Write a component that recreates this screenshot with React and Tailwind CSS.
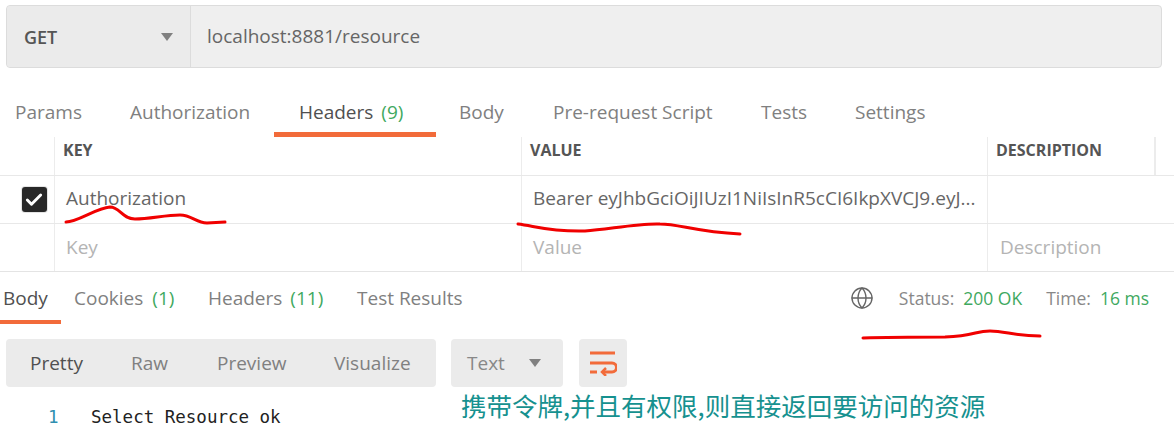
import React from 'react'
import { Globe, Check } from 'lucide-react'

const Count = ({ children, className = 'ml-[8px]' }) => <span className={`text-[#3fa95f] ${className}`}>{children}</span>

const Caret = ({ className }) => (
    <svg className={className} width="12" height="8" viewBox="0 0 12 8">
        <path d="M0 0h12L6 8z" fill="#808080" />
    </svg>
)

const RequestTab = ({ children, active, className }) => (
    <div className={`h-[42px] flex items-center ${active ? 'border-b-[5px] border-[#f26b3a] pb-[3px] text-[#505050]' : 'pb-[8px] text-[#808080]'} ${className}`}>
        {children}
    </div>
)

const Row = ({ check, keyText, value, desc, muted }) => (
    <div className="flex h-[48px] border-t border-[#e8e8e8] text-[19px]">
        <div className="w-[55px] border-r border-[#ececec] flex items-center justify-center pl-[14px]">
            {check && (
                <div className="w-[25px] h-[25px] rounded-[3px] bg-[#282828] ring-1 ring-[#e4e4e4] flex items-center justify-center">
                    <Check size={20} strokeWidth={3.5} className="text-white" />
                </div>
            )}
        </div>
        <div className={`w-[467px] border-r border-[#ececec] pl-[11px] flex items-center ${muted ? 'text-[#b4b4b4]' : 'pb-[2px] text-[#666]'}`}>{keyText}</div>
        <div className={`w-[466px] border-r border-[#ececec] pl-[11px] flex items-center whitespace-nowrap overflow-hidden ${muted ? 'text-[#b4b4b4]' : 'pb-[2px] text-[#666]'}`}>{value}</div>
        <div className="flex-1 pl-[12px] flex items-center text-[#b4b4b4]">{desc}</div>
    </div>
)

export default function App() {
    return (
        <div className="relative w-[1174px] h-[445px] bg-white overflow-hidden font-['Open_Sans',sans-serif]">
            {/* URL bar */}
            <div className="pt-[5px] pl-[6px] pr-[12px]">
                <div className="h-[63px] flex bg-[#efefef] border border-[#dcdcdc] rounded-[4px]">
                    <div className="w-[184px] pt-[1px] flex items-center shrink-0 border-r border-[#dcdcdc] bg-[#ebebeb] rounded-l-[4px]">
                        <span className="pl-[17px] text-[18px] font-semibold text-[#555]">GET</span>
                        <Caret className="ml-auto mr-[17px]" />
                    </div>
                    <div className="pl-[16px] flex items-center text-[19px] text-[#666]">localhost:8881/resource</div>
                </div>
            </div>

            {/* Request tabs */}
            <div className="flex mt-[27px] h-[42px] text-[19px] whitespace-nowrap">
                <RequestTab className="pl-[15px] w-[130px]">Params</RequestTab>
                <RequestTab className="w-[144px]">Authorization</RequestTab>
                <RequestTab active className="w-[162px] pl-[25px]">Headers<Count>(9)</Count></RequestTab>
                <RequestTab className="pl-[23px] w-[117px]">Body</RequestTab>
                <RequestTab className="w-[208px]">Pre-request Script</RequestTab>
                <RequestTab className="w-[94px]">Tests</RequestTab>
                <RequestTab>Settings</RequestTab>
            </div>

            {/* Headers table */}
            <div className="flex h-[38px] text-[16px] font-bold text-[#555]">
                <div className="w-[55px] border-r border-[#ececec]" />
                <div className="w-[467px] border-r border-[#ececec] pl-[8px] pb-[12px] flex items-center">KEY</div>
                <div className="w-[466px] border-r border-[#ececec] pl-[8px] pb-[12px] flex items-center">VALUE</div>
                <div className="w-[168px] border-r-2 border-[#ececec] pl-[8px] pb-[12px] flex items-center">DESCRIPTION</div>
            </div>
            <Row check keyText="Authorization" value="Bearer eyJhbGciOiJIUzI1NiIsInR5cCI6IkpXVCJ9.eyJ..." />
            <Row muted keyText="Key" value="Value" desc="Description" />

            {/* Response tabs */}
            <div className="flex items-start border-t border-[#e4e4e4] h-[52px] text-[19px] whitespace-nowrap">
                <div className="w-[61px] h-[52px] pl-[3px] pt-[12px] border-b-[4px] border-[#f26b3a] text-[#505050]">Body</div>
                <div className="pl-[13px] w-[147px] pt-[12px] text-[#808080]">Cookies<Count className="ml-[9px]">(1)</Count></div>
                <div className="w-[149px] pt-[12px] text-[#808080]">Headers<Count>(11)</Count></div>
                <div className="pt-[12px] text-[#808080]">Test Results</div>
                <div className="ml-auto pr-[25px] pt-[13px] flex items-center text-[17.5px] text-[#888]">
                    <Globe size={24} strokeWidth={1.4} className="text-[#666] mr-[25px]" />
                    <span>Status:</span>
                    <span className="ml-[9px] text-[#3fa95f]">200 OK</span>
                    <span className="ml-[24px]">Time:</span>
                    <span className="ml-[9px] text-[#3fa95f]">16 ms</span>
                </div>
            </div>

            {/* Response toolbar */}
            <div className="flex mt-[16px] pl-[6px] h-[48px] text-[19px]">
                <div className="w-[430px] flex items-center bg-[#ebebeb] rounded-[4px] text-[#808080]">
                    <span className="pl-[24px] w-[125px] text-[#505050]">Pretty</span>
                    <span className="w-[86px]">Raw</span>
                    <span className="w-[117px]">Preview</span>
                    <span>Visualize</span>
                </div>
                <div className="ml-[15px] w-[112px] flex items-center bg-[#ebebeb] rounded-[4px] text-[#888]">
                    <span className="pl-[16px]">Text</span>
                    <Caret className="ml-auto mr-[22px]" />
                </div>
                <div className="ml-[16px] w-[48px] flex items-center justify-center bg-[#ebebeb] rounded-[4px]">
                    <svg width="28" height="26" viewBox="0 0 28 26" fill="none" stroke="#f26b3a" strokeWidth="3">
                        <path d="M1 3h25M1 13h22a3.5 3.5 0 0 1 0 9H14M1 22h7" />
                        <path d="M17 18l-4 4 4 4" strokeWidth="2.5" />
                    </svg>
                </div>
            </div>

            {/* Code */}
            <div className="flex mt-[19px] h-[22px] items-center font-['DejaVu_Sans_Mono',monospace] text-[17.5px] whitespace-pre">
                <span className="pl-[48px] w-[91px] text-[#2f8fb0]">1</span>
                <span className="text-[#222]">Select Resource ok</span>
            </div>

            {/* Annotation drawn over the screenshot */}
            <div className="absolute left-[461px] top-[389px] text-[25.5px] leading-[32px] text-[#16918f] whitespace-nowrap font-['Noto_Sans_CJK_SC',sans-serif]">
                携带令牌,并且有权限,则直接返回要访问的资源
            </div>
            <svg className="absolute left-0 top-0 pointer-events-none" width="1174" height="445" fill="none" stroke="#f00000" strokeWidth="3" strokeLinecap="round">
                <path d="M66 222C78 222 96 208 110 207C120 207 122 219 135 219C150 219 165 215 180 215C192 215 196 223 207 223L225 222" />
                <path d="M518 224C535 226 550 232 585 231C610 229 640 223 660 224C680 224 695 232 740 234" />
                <path d="M863 338C890 337 920 337 945 337C975 336 975 331 990 331C1005 331 1015 336 1040 336" />
            </svg>
        </div>
    )
}
